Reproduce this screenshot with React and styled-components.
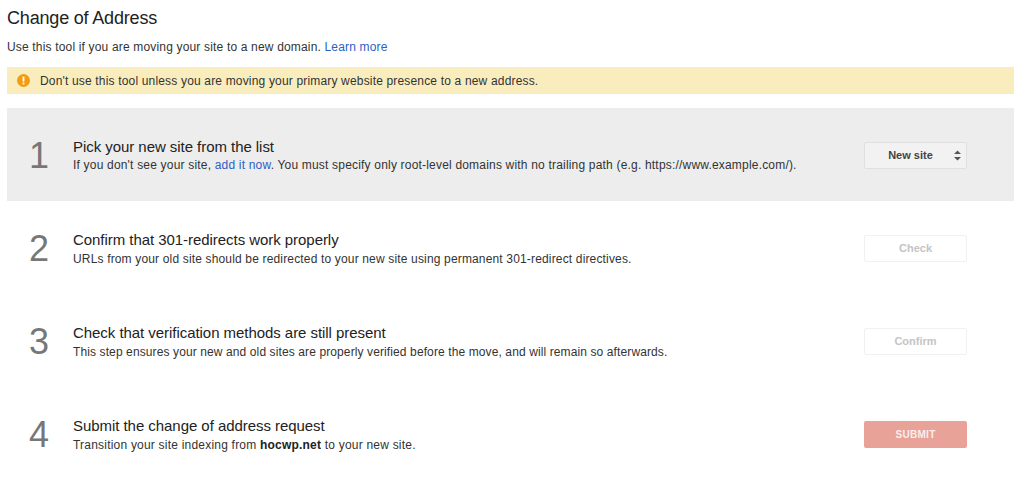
import styled, { createGlobalStyle } from "styled-components";

const Global = createGlobalStyle`
  html, body {
    margin: 0;
    background: #fff;
    font-family: "Liberation Sans", Arial, sans-serif;
    color: #222;
  }
`;

const Page = styled.div`
  width: 1024px;
  height: 479px;
  box-sizing: border-box;
  padding: 8px 10px 0 7px;
  overflow: hidden;
`;

const Title = styled.h1`
  margin: 0;
  font-size: 18px;
  font-weight: 400;
  line-height: 21px;
  letter-spacing: -0.18px;
  color: #222;
`;

const Intro = styled.p`
  margin: 10px 0 0;
  font-size: 12px;
  line-height: 16px;
  letter-spacing: 0.17px;
  color: #333;
`;

const Link = styled.a`
  color: #2d5fc4;
  text-decoration: none;
`;

const Warning = styled.div`
  margin-top: 12px;
  height: 27px;
  display: flex;
  align-items: center;
  gap: 10px;
  padding-left: 10px;
  background: #f9edbe;
  font-size: 12px;
  letter-spacing: 0.17px;
  color: #333;
`;

const Steps = styled.div`
  margin-top: 14px;
  display: flex;
  flex-direction: column;
`;

const Step = styled.div`
  height: 93px;
  box-sizing: border-box;
  display: flex;
  align-items: center;
  padding: 2px 47px 0 0;
  background: ${(props) => (props.$active ? "#ededed" : "transparent")};
`;

const Num = styled.div`
  width: 66px;
  padding-left: 22px;
  box-sizing: border-box;
  font-size: 36px;
  line-height: 40px;
  color: #777;
`;

const Body = styled.div`
  flex: 1;
  display: flex;
  flex-direction: column;
  gap: ${(props) => (props.$active ? "3px" : "4px")};
`;

const StepTitle = styled.div`
  font-size: 15px;
  line-height: 17px;
  letter-spacing: -0.05px;
  color: #222;
`;

const StepDesc = styled.div`
  font-size: 12px;
  line-height: 15px;
  letter-spacing: ${(props) => props.$spacing || "0.17px"};
  color: #333;

  b {
    color: #222;
  }
`;

const Button = styled.div`
  width: 103px;
  height: 27px;
  box-sizing: border-box;
  position: relative;
  display: flex;
  align-items: center;
  justify-content: center;
  padding-right: ${(props) => (props.$select ? "10px" : "0")};
  padding-bottom: 1px;
  border-radius: 2px;
  font-size: 11px;
  font-weight: 700;
  border: 1px solid ${(props) => (props.$select ? "#e0e0e0" : "#f1f1f1")};
  background: ${(props) => (props.$select ? "#f2f2f2" : "#fff")};
  color: ${(props) => (props.$select ? "#444" : "#c4c4c4")};
`;

const SubmitButton = styled(Button)`
  border: 0;
  background: #e8a298;
  color: #fbeeec;
  letter-spacing: 0.3px;
  font-size: 10px;
`;

const Arrows = styled.svg`
  position: absolute;
  right: 4px;
  top: 7px;
`;

const App = () => {
  return (
    <Page>
      <Global />
      <Title>Change of Address</Title>
      <Intro>
        Use this tool if you are moving your site to a new domain. <Link>Learn more</Link>
      </Intro>
      <Warning>
        <svg width="13" height="13" viewBox="0 0 13 13">
          <circle cx="6.5" cy="6.5" r="6.5" fill="#f39c12" />
          <rect x="5.6" y="2.6" width="1.8" height="5" fill="#fff" />
          <rect x="5.6" y="8.6" width="1.8" height="1.8" fill="#fff" />
        </svg>
        Don't use this tool unless you are moving your primary website presence to a new address.
      </Warning>
      <Steps>
        <Step $active>
          <Num>1</Num>
          <Body $active>
            <StepTitle>Pick your new site from the list</StepTitle>
            <StepDesc $spacing="0.19px">
              If you don't see your site, <Link>add it now</Link>. You must specify only root-level domains with no trailing path (e.g. https://www.example.com/).
            </StepDesc>
          </Body>
          <Button $select>
            New site
            <Arrows width="9" height="11" viewBox="0 0 9 11">
              <path d="M4.5 0.5L8 4H1z M4.5 10.5L1 7h7z" fill="#555" />
            </Arrows>
          </Button>
        </Step>
        <Step>
          <Num>2</Num>
          <Body>
            <StepTitle>Confirm that 301-redirects work properly</StepTitle>
            <StepDesc $spacing="0.16px">URLs from your old site should be redirected to your new site using permanent 301-redirect directives.</StepDesc>
          </Body>
          <Button>Check</Button>
        </Step>
        <Step>
          <Num>3</Num>
          <Body>
            <StepTitle>Check that verification methods are still present</StepTitle>
            <StepDesc $spacing="0.11px">This step ensures your new and old sites are properly verified before the move, and will remain so afterwards.</StepDesc>
          </Body>
          <Button>Confirm</Button>
        </Step>
        <Step>
          <Num>4</Num>
          <Body>
            <StepTitle>Submit the change of address request</StepTitle>
            <StepDesc $spacing="0.21px">
              Transition your site indexing from <b>hocwp.net</b> to your new site.
            </StepDesc>
          </Body>
          <SubmitButton>SUBMIT</SubmitButton>
        </Step>
      </Steps>
    </Page>
  );
};

export default App;
